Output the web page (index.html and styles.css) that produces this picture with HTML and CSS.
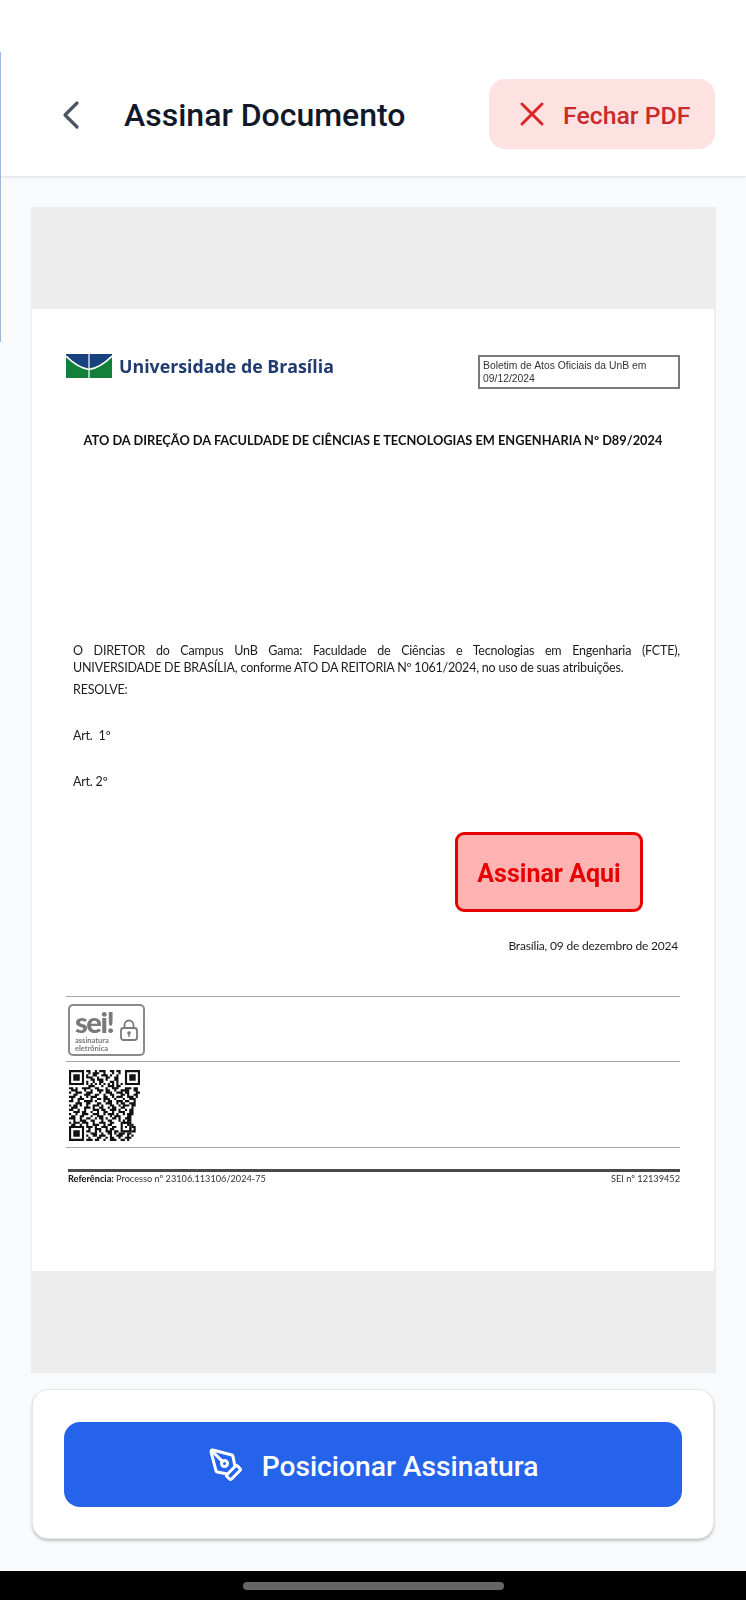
FILE: index.html
```html
<!DOCTYPE html>
<html lang="pt-BR">
<head>
<meta charset="utf-8">
<title>Assinar Documento</title>
<link rel="stylesheet" href="styles.css">
</head>
<body>
<div class="app">
  <span class="edge"></span>
  <header class="topbar">
    <div class="topbar-left">
      <button class="back" aria-label="Voltar">
        <svg width="20" height="30" viewBox="0 0 20 30"><path d="M16 3 4 15l12 12" fill="none" stroke="#4b5563" stroke-width="3.200" stroke-linecap="round" stroke-linejoin="round"/></svg>
      </button>
      <h1 class="title">Assinar Documento</h1>
    </div>
    <button class="close">
      <svg width="26" height="26" viewBox="0 0 26 26"><path d="M3 3 23 23M23 3 3 23" fill="none" stroke="#dc2626" stroke-width="3" stroke-linecap="round"/></svg>
      <span>Fechar PDF</span>
    </button>
  </header>

  <main class="main">
    <section class="viewer">
      <article class="page">
        <div class="doc-head">
          <div class="brand">
            <svg class="brand-mark" width="46" height="24" viewBox="0 0 46 24">
              <rect width="46" height="24" fill="#12803a"/>
              <path d="M0 0h46v2C40 7 32 13 23 14 14 13 6 7 0 2z" fill="#17427f"/>
              <path d="M0 2C6 8 14 14 23 15.500 32 14 40 8 46 2" fill="none" stroke="#fff" stroke-width="1.600"/>
              <path d="M23 0v24" stroke="#fff" stroke-width="1.200"/>
            </svg>
            <span class="brand-name">Universidade de Brasília</span>
          </div>
          <div class="bulletin">Boletim de Atos Oficiais da UnB em 09/12/2024</div>
        </div>

        <h2 class="act">ATO DA DIREÇÃO DA FACULDADE DE CIÊNCIAS E TECNOLOGIAS EM ENGENHARIA Nº D89/2024</h2>

        <p class="lead"><span class="lead-first">O DIRETOR do Campus UnB Gama: Faculdade de Ciências e Tecnologias em Engenharia (FCTE),</span> <span class="lead-last">UNIVERSIDADE DE BRASÍLIA, conforme ATO DA REITORIA Nº 1061/2024, no uso de suas atribuições.</span></p>
        <p class="resolve">RESOLVE:</p>
        <p class="art art-first">Art.&nbsp; 1º</p>
        <p class="art">Art. 2º</p>

        <p class="date">Brasília, 09 de dezembro de 2024</p>

        <div class="sign-row">
          <div class="sei">
            <div class="sei-text">
              <span class="sei-word">sei!</span>
              <span class="sei-sub">assinatura eletrônica</span>
            </div>
            <svg width="18" height="22" viewBox="0 0 18 22"><path d="M4.500 9V6a4.500 4.500 0 0 1 9 0v3" fill="none" stroke="#7b7b7b" stroke-width="1.800"/><rect x="1" y="9" width="16" height="12" rx="2.500" fill="none" stroke="#7b7b7b" stroke-width="1.800"/><circle cx="9" cy="14" r="1.800" fill="#7b7b7b"/><path d="M9 14v4" stroke="#7b7b7b" stroke-width="1.400"/></svg>
          </div>
        </div>

        <div class="qr-row">
          <svg class="qr" width="71" height="71" viewBox="0 0 33 33">
            <path fill="#111" fill-rule="evenodd" d="M0 0h7v7H0zM1 1v5h5V1zM2 2h3v3H2zM26 0h7v7h-7zM27 1v5h5V1zM28 2h3v3h-3zM0 26h7v7H0zM1 27v5h5v-5zM2 28h3v3H2zM24 24h5v5h-5zM25 25v3h3v-3zM26 26h1v1h-1z"/>
            <path fill="none" stroke="#111" d="M8 .5h2m2 0h1m1 0h3m2 0h2m1 0h2M9 1.500h1m1 0h3m2 0h1m3 0h1m2 0h1M8 2.500h1m2 0h2m2 0h3m1 0h1m2 0h1M8 3.500h3m2 0h1m3 0h2m2 0h2M10 4.500h2m1 0h3m1 0h1m3 0h2M8 5.500h1m2 0h1m2 0h2m3 0h2m1 0h1M8 6.500h1m1 0h1m1 0h1m1 0h1m1 0h1m1 0h1m1 0h1m1 0h1m1 0h1M9 7.500h3m3 0h1m2 0h3m1 0h2M0 8.500h2m1 0h1m2 0h4m2 0h2m3 0h1m2 0h3m3 0h3m1 0h2M1 9.500h3m3 0h1m2 0h1m2 0h3m1 0h2m2 0h1m2 0h4m2 0h2M0 10.500h1m2 0h3m2 0h3m3 0h1m2 0h3m2 0h3m1 0h2m3 0h3M2 11.500h2m3 0h3m2 0h2m2 0h1m2 0h2m3 0h2m1 0h1m2 0h2M0 12.500h3m2 0h1m2 0h1m1 0h3m3 0h2m2 0h1m1 0h3m2 0h3m1 0h1M1 13.500h1m2 0h3m3 0h1m2 0h2m1 0h3m2 0h1m3 0h1m2 0h3M0 14.500h2m2 0h1m2 0h4m1 0h1m3 0h1m1 0h2m2 0h3m1 0h2m2 0h1M3 15.500h3m2 0h2m3 0h2m2 0h3m2 0h1m1 0h2m2 0h3M0 16.500h1m1 0h2m1 0h1m2 0h1m2 0h3m1 0h1m3 0h2m2 0h1m1 0h3m1 0h2M1 17.500h3m3 0h3m1 0h1m2 0h2m2 0h1m1 0h2m2 0h2m3 0h1M0 18.500h2m2 0h1m2 0h1m3 0h3m1 0h2m2 0h3m1 0h1m2 0h1m1 0h2M2 19.500h3m1 0h2m2 0h1m2 0h1m2 0h2m2 0h1m2 0h3m2 0h2M0 20.500h1m2 0h1m2 0h3m2 0h3m2 0h1m1 0h3m1 0h1m2 0h1m1 0h3M1 21.500h2m2 0h2m3 0h1m2 0h3m3 0h1m1 0h3m3 0h2M0 22.500h3m2 0h1m2 0h2m2 0h1m1 0h2m1 0h1m2 0h2m1 0h1m2 0h3M2 23.500h1m2 0h3m2 0h2m3 0h1m2 0h2m3 0h1m1 0h1m1 0h2M0 24.500h1m1 0h3m1 0h3m2 0h1m2 0h3m2 0h2m4 0h3M1 25.500h2m2 0h1m2 0h1m2 0h3m2 0h1m1 0h2m7 0h1m1 0h1M8 26.500h3m1 0h1m2 0h3m2 0h2m7 0h2M9 27.500h1m2 0h3m2 0h1m1 0h2m7 0h1m1 0h1M8 28.500h2m2 0h1m1 0h1m2 0h3m1 0h2m6 0h2M10 29.500h3m2 0h1m2 0h2m1 0h1m1 0h3m1 0h2M8 30.500h1m2 0h2m1 0h3m2 0h1m2 0h3m2 0h1m1 0h1M9 31.500h1m3 0h2m2 0h1m1 0h2m2 0h1m2 0h3M8 32.500h3m1 0h2m2 0h1m2 0h3m2 0h2m1 0h1"/>
          </svg>
        </div>

        <div class="ref-rule"></div>
        <div class="ref">
          <span><b>Referência:</b> Processo nº 23106.113106/2024-75</span>
          <span>SEI nº 12139452</span>
        </div>

        <div class="marker">Assinar Aqui</div>
      </article>
    </section>

    <section class="action-card">
      <button class="primary">
        <svg width="36" height="36" viewBox="0 0 24 24" fill="none" stroke="#fff" stroke-width="2" stroke-linecap="round" stroke-linejoin="round"><path d="M15.707 21.293a1 1 0 0 1-1.414 0l-1.586-1.586a1 1 0 0 1 0-1.414l5.586-5.586a1 1 0 0 1 1.414 0l1.586 1.586a1 1 0 0 1 0 1.414z"/><path d="m18 13-1.375-6.874a1 1 0 0 0-.746-.776L3.235 2.028a1 1 0 0 0-1.207 1.207L5.35 15.879a1 1 0 0 0 .776.746L13 18"/><path d="m2.300 2.300 7.286 7.286"/><circle cx="11" cy="11" r="2"/></svg>
        <span class="primary-label">Posicionar Assinatura</span>
      </button>
    </section>
  </main>

  <footer class="navbar"><span class="pill"></span></footer>
</div>
</body>
</html>
```

FILE: styles.css
```css
* { box-sizing: border-box; }
html, body { margin: 0; padding: 0; }
body { background: #f8fafc; font-family: Roboto, "Liberation Sans", sans-serif; }
button { font-family: inherit; border: 0; cursor: pointer; }
h1, h2, p { margin: 0; }

.app { position: relative; width: 746px; height: 1600px; display: flex; flex-direction: column; overflow: hidden; }
.edge { position: absolute; left: 0; top: 52px; width: 1px; height: 290px; background: #9ab7dc; z-index: 2; }

.topbar { height: 177px; flex: none; background: #fff; border-bottom: 1px solid #e5e7eb; box-shadow: 0 1px 3px rgba(0,0,0,.06); display: flex; align-items: flex-end; justify-content: space-between; padding: 0 31px 27px 61px; position: relative; }
.topbar-left { display: flex; align-items: center; height: 70px; gap: 43px; }
.back { background: none; padding: 0; width: 20px; height: 30px; display: flex; margin-top: 2px; }
.title { font-size: 32px; font-weight: 500; color: #111827; letter-spacing: 0; margin-top: 1px; }
.close { width: 226px; height: 70px; background: #fee2e2; border-radius: 16px; display: flex; align-items: center; padding-left: 30px; gap: 18px; color: #c92a2a; font-size: 24.800px; font-weight: 500; }
.close span { padding-top: 2px; }

.main { flex: 1; min-height: 0; display: flex; flex-direction: column; padding: 30px 30px 32px 31px; background: #f8fafc; }
.viewer { height: 1166px; flex: none; background: #ededed; padding: 102px 2px 0 1px; }
.page { position: relative; height: 962px; background: #fff; padding: 45px 34px 0; color: #1c1c1c; font-family: Lato, "Open Sans", sans-serif; filter: blur(.25px); }

.doc-head { display: flex; justify-content: space-between; align-items: flex-start; height: 35px; }
.brand { display: flex; align-items: center; gap: 7px; height: 24px; }
.brand-mark { flex: none; }
.brand-name { font-family: "Open Sans", sans-serif; font-weight: 700; font-size: 17.800px; color: #1f3b70; }
.bulletin { width: 202px; height: 34px; margin-top: 1px; border: 2px solid #7a7a7a; padding: 2px 2px 2px 3px; font-family: "Liberation Sans", sans-serif; font-size: 10.350px; line-height: 13px; color: #333; }

.act { margin-top: 43px; text-align: center; font-size: 12.800px; line-height: 16px; font-weight: 700; color: #111; white-space: nowrap; }

.lead { margin: 194px 0 0 7px; font-size: 12.500px; letter-spacing: -.2px; line-height: 17px; }
.lead-first { display: block; text-align: justify; text-align-last: justify; }
.lead-last { display: block; white-space: nowrap; }
.resolve { margin: 5px 0 0 7px; font-size: 12.500px; letter-spacing: -.2px; line-height: 17px; }
.art { margin: 29px 0 0 7px; font-size: 12.500px; letter-spacing: -.2px; line-height: 17px; }
.art-first { margin-top: 29px; }
.date { margin-top: 148px; text-align: right; font-size: 12px; letter-spacing: -.2px; line-height: 16px; padding-right: 2px; }

.sign-row { margin-top: 42px; height: 66px; border-top: 1px solid #a8a8a8; border-bottom: 1px solid #a8a8a8; padding: 7px 0 0 2px; }
.sei { width: 77px; height: 52px; border: 2.500px solid #8a8a8a; border-radius: 5px; display: flex; align-items: center; gap: 3px; padding: 0 0 0 5px; color: #777; }
.sei-text { display: flex; flex-direction: column; width: 42px; flex: none; }
.sei-word { font-size: 29px; line-height: 30px; font-weight: 900; letter-spacing: -1.500px; color: #7a7a7a; }
.sei-sub { font-size: 7.500px; line-height: 8px; font-weight: 700; color: #777; }

.qr-row { height: 86px; border-bottom: 1px solid #a8a8a8; padding: 8px 0 0 3px; }
.qr { display: block; }

.ref-rule { margin: 21px 0 0 2px; height: 3px; background: #4a4a4a; }
.ref { display: flex; justify-content: space-between; margin: 1px 0 0 2px; font-size: 9.200px; line-height: 12px; color: #333; }
.ref b { color: #111; }

.marker { position: absolute; left: 423px; top: 523px; width: 188px; height: 80px; border: 3px solid #e60000; border-radius: 9px; background: #ffb3b3; color: #e60000; font-family: Roboto, sans-serif; font-size: 25px; font-weight: 700; display: flex; align-items: center; justify-content: center; padding-top: 2px; }

.action-card { margin: 16px 2px 0 1px; height: 150px; flex: none; background: #fff; border: 1px solid #e5e7eb; border-radius: 16px; box-shadow: 0 2px 3px rgba(0,0,0,.22); padding: 32px 31px; }
.primary { width: 618px; height: 85px; background: #2563eb; border-radius: 16px; color: #fff; font-size: 28.200px; font-weight: 500; display: flex; align-items: center; justify-content: center; gap: 18px; }
.primary-label { padding-top: 3px; }

.navbar { height: 29px; flex: none; background: #000; display: flex; align-items: flex-start; justify-content: center; padding-top: 11px; }
.pill { width: 261px; height: 8px; border-radius: 4px; background: #666; }
```
